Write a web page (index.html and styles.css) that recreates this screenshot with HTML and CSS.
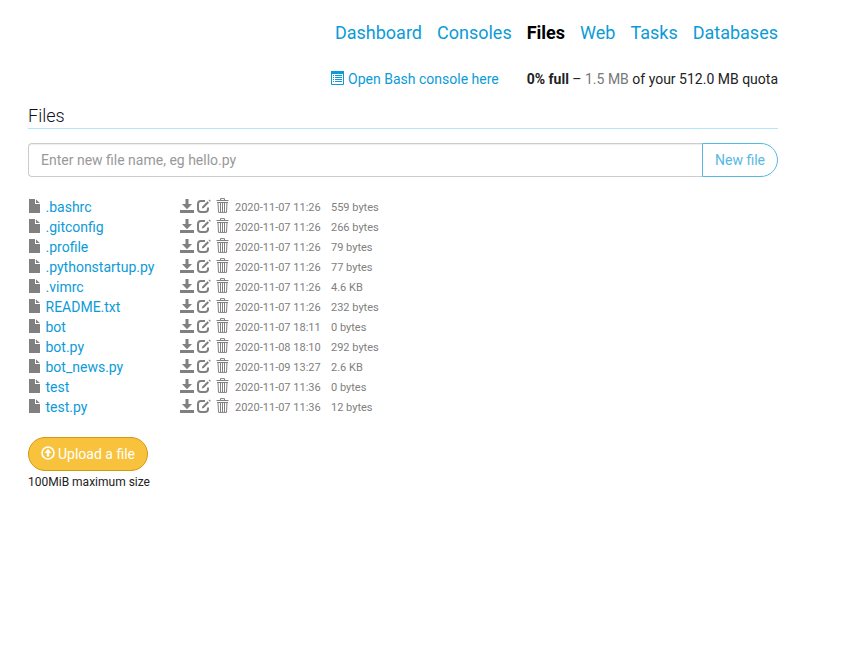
FILE: index.html
```html
<!DOCTYPE html>
<html lang="en">
<head>
<meta charset="utf-8">
<title>Files</title>
<link rel="stylesheet" href="styles.css">
</head>
<body>
<svg class="sprite" aria-hidden="true">
  <symbol id="file" viewBox="0 0 11 14"><path d="M0 0H6V5H11V14H0ZM7 .5L10.800 4H7Z"/></symbol>
  <symbol id="download" viewBox="0 0 14 14"><path d="M5.500 0h3v5H12L7 10.200 2 5h3.500ZM0 11h14v3H0Z"/></symbol>
  <symbol id="edit" viewBox="0 0 14 14"><path d="M8 2H4Q1 2 1 5v5q0 3 3 3h4q3 0 3-3V8.500" fill="none" stroke="currentColor" stroke-width="2"/><path d="M4.800 9.500L5.300 7.500 10.500 2.300l1.500 1.500-5.200 5.200ZM11.500 1.300l.9-.9 1.500 1.500-.9.9Z"/></symbol>
  <symbol id="trash" viewBox="0 0 13 15"><path d="M4.500 2.500V.6h4v1.900M.5 2.500h12M1 4.500h11M2 4.500l.5 9.900h8l.5-9.900M4.500 5v9M6.500 5v9M8.500 5v9" fill="none" stroke="currentColor"/></symbol>
</svg>
<main class="page">
  <nav class="nav"><a>Dashboard</a><a>Consoles</a><a class="active">Files</a><a>Web</a><a>Tasks</a><a>Databases</a></nav>
  <div class="status">
    <a class="console"><svg class="list" viewBox="0 0 13 14"><path d="M.5.5h12v13H.5Z" fill="none" stroke="currentColor"/><path d="M0 0h13v3H0ZM2 4h1v1H2ZM4 4h7v1H4ZM2 6h1v1H2ZM4 6h7v1H4ZM2 8h1v1H2ZM4 8h7v1H4ZM2 10h1v1H2ZM4 10h7v1H4Z"/></svg>Open Bash console here</a>
    <span class="quota"><b>0% full</b> – <span class="used">1.5 MB</span> of your 512.0 MB quota</span>
  </div>
  <h1>Files</h1>
  <div class="new-file"><input type="text" placeholder="Enter new file name, eg hello.py"><button>New file</button></div>
  <div class="files" id="files"></div>
  <button class="upload"><svg viewBox="0 0 14 14"><circle cx="7" cy="7" r="6" fill="none" stroke="currentColor" stroke-width="1.700"/><path d="M7 2.800L10.500 7H8.200v3.500H5.800V7H3.500Z"/></svg>Upload a file</button>
  <p class="limit">100MiB maximum size</p>
</main>
<script src="files.js"></script>
</body>
</html>
```
FILE: styles.css
```css
* { box-sizing: border-box; }
body { margin: 0; background: #fff; color: #222; font: 14px/20px Roboto, sans-serif; }
a { color: #0c9bd7; }
svg { fill: currentColor; }
.sprite { position: absolute; width: 0; height: 0; }
.page { width: 750px; margin-left: 28px; padding-top: 20px; }
.nav { display: flex; justify-content: flex-end; gap: 15px; font-size: 18px; line-height: 26px; }
.nav .active { color: #000; font-weight: 700; }
.status { display: flex; justify-content: flex-end; gap: 28px; margin-top: 23px; }
.console { display: flex; }
.list { width: 13px; height: 14px; margin: 2px 4px 0 0; }
.used { color: #777; }
h1 { height: 24px; margin: 16px 0 14px; border-bottom: 1px solid #b2e7fa; color: #112; font-size: 18px; font-weight: 300; line-height: 22px; }
.new-file { display: flex; height: 34px; }
button, input { font: inherit; }
.new-file input { flex: 1; padding: 0 12px; border: 1px solid #ccc; border-right: 0; border-radius: 4px 0 0 4px; box-shadow: inset 0 1px 1px rgba(0, 0, 0, .07); }
.new-file input::placeholder { color: #999; }
.new-file button { width: 76px; padding: 0; border: 1px solid #55b9e3; border-radius: 0 17px 17px 0; background: #fff; color: #55b9e3; }
.files { margin-top: 20px; }
.row { display: grid; grid-template-columns: 17.500px 134.500px 17px 18px 20px 96px auto; height: 20px; color: #808080; }
.row small { font-size: 11px; line-height: 21px; }
.file { width: 11px; height: 14px; margin: 2px 0 0 1px; }
.download { width: 14px; height: 14px; margin-top: 2px; }
.edit { width: 14px; height: 14px; margin-top: 2px; }
.trash { width: 13px; height: 15px; margin: 1px 0 0 1px; }
.upload { display: flex; align-items: center; justify-content: center; width: 120px; height: 34px; margin-top: 20px; padding: 0; border: 1px solid #d39a13; border-radius: 17px; background: #f8c23d; color: #fff; }
.upload svg { width: 14px; height: 14px; margin: -2px 3px 0 0; }
.limit { margin: 1px 0 0; font-size: 12px; }
```
FILE: files.js
```js
const files = [
  [".bashrc", "2020-11-07 11:26", "559 bytes"],
  [".gitconfig", "2020-11-07 11:26", "266 bytes"],
  [".profile", "2020-11-07 11:26", "79 bytes"],
  [".pythonstartup.py", "2020-11-07 11:26", "77 bytes"],
  [".vimrc", "2020-11-07 11:26", "4.6 KB"],
  ["README.txt", "2020-11-07 11:26", "232 bytes"],
  ["bot", "2020-11-07 18:11", "0 bytes"],
  ["bot.py", "2020-11-08 18:10", "292 bytes"],
  ["bot_news.py", "2020-11-09 13:27", "2.6 KB"],
  ["test", "2020-11-07 11:36", "0 bytes"],
  ["test.py", "2020-11-07 11:36", "12 bytes"]
];
const icon = (name) => `<svg class="${name}"><use href="#${name}"/></svg>`;
document.getElementById("files").innerHTML = files.map(([name, date, size]) =>
  `<div class="row">${icon("file")}<a>${name}</a>${icon("download")}${icon("edit")}${icon("trash")}<small>${date}</small><small>${size}</small></div>`
).join("");
```
